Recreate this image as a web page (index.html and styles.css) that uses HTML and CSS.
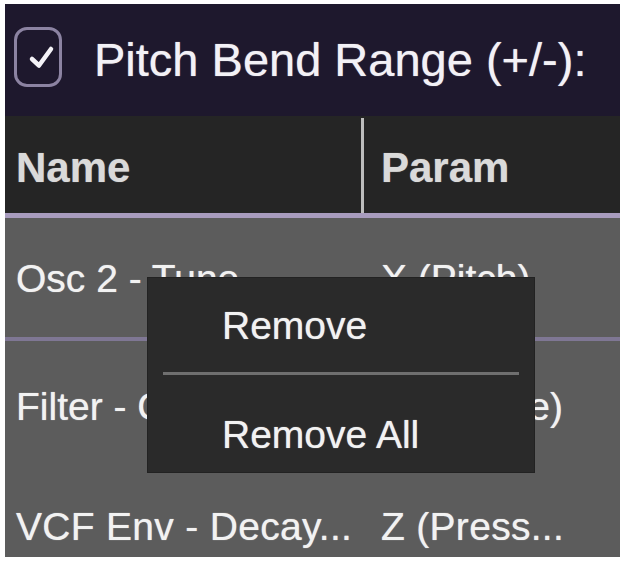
FILE: index.html
```html
<!DOCTYPE html>
<html lang="en">
<head>
  <meta charset="UTF-8" />
  <title>MPE Mapping</title>
  <link rel="stylesheet" href="styles.css">
</head>
<body>
  <div class="panel">
    <header class="top">
      <span class="checkbox">
        <svg viewBox="0 0 48 60" width="48" height="60">
          <path d="M18 32 L25 38.5 L37 22" fill="none" stroke="#f4f2f7" stroke-width="4.5" stroke-linecap="round" stroke-linejoin="round"/>
        </svg>
      </span>
      <span class="title">Pitch Bend Range (+/-):</span>
    </header>

    <div class="table">
      <div class="thead">
        <div class="cell name">Name</div>
        <div class="divider"></div>
        <div class="cell param">Param</div>
      </div>
      <div class="row first">
        <div class="cell name">Osc 2 - Tune</div>
        <div class="cell param">X (Pitch)</div>
      </div>
      <div class="row sep">
        <div class="cell name">Filter - Cutoff</div>
        <div class="cell param">Y (Timbre)</div>
      </div>
      <div class="row plain">
        <div class="cell name">VCF Env - Decay...</div>
        <div class="cell param">Z (Press...</div>
      </div>
    </div>

    <div class="menu">
      <div class="menu-item">Remove</div>
      <div class="menu-sep"></div>
      <div class="menu-item last">Remove All</div>
    </div>
  </div>
</body>
</html>
```

FILE: styles.css
```css
html, body {
  margin: 0;
  background: #fff;
  font-family: 'Liberation Sans', Arial, sans-serif;
}
.panel {
  position: relative;
  margin: 4px 0 0 5px;
  width: 615px;
  height: 553px;
  overflow: hidden;
  background: #5c5c5c;
}
.top {
  display: flex;
  align-items: flex-start;
  height: 112px;
  padding: 23px 0 0 9px;
  box-sizing: border-box;
  background: #1e182d;
}
.checkbox {
  width: 48px;
  height: 60px;
  box-sizing: border-box;
  border: 3px solid #8c83a2;
  border-radius: 13px;
  position: relative;
}
.checkbox svg {
  position: absolute;
  left: -3px;
  top: -3px;
}
.title {
  margin: 9px 0 0 32px;
  font-size: 47px;
  line-height: 47px;
  color: #f3f1f6;
  white-space: nowrap;
  text-shadow: 0 0 1px rgba(255, 255, 255, 0.7);
}
.thead {
  display: grid;
  grid-template-columns: 356px 3px 1fr;
  height: 97px;
  background: #252525;
  border-bottom: 5px solid #a89cbe;
}
.thead .cell {
  padding-top: 31px;
  font-size: 42px;
  line-height: 42px;
  font-weight: bold;
  color: #dadada;
  text-shadow: 0 0 1px rgba(255, 255, 255, 0.5);
}
.divider {
  margin-top: 2px;
  background: #bdbdbd;
}
.cell.name {
  padding-left: 11px;
  white-space: nowrap;
}
.cell.param {
  padding-left: 17px;
  white-space: nowrap;
}
.row {
  display: grid;
  grid-template-columns: 359px 1fr;
  height: 120px;
  box-sizing: border-box;
  padding-top: 42px;
  font-size: 39px;
  line-height: 39px;
  color: #f2f2f2;
  text-shadow: 0 0 1px rgba(255, 255, 255, 0.7);
}
.row.first {
  height: 119px;
  padding-top: 41px;
}
.row.sep {
  border-top: 4px solid #7f7794;
  height: 124px;
  padding-top: 46px;
}
.row.plain {
  border-top: 4px solid #5c5c5c;
  height: 124px;
  padding-top: 42px;
  letter-spacing: 0.3px;
}
.menu {
  position: absolute;
  left: 142px;
  top: 273px;
  width: 388px;
  height: 196px;
  box-sizing: border-box;
  padding-top: 28px;
  background: #2a2a2a;
  border: 1px solid #222;
}
.menu-item {
  padding-left: 74px;
  font-size: 39px;
  line-height: 39px;
  color: #f2f2f2;
  text-shadow: 0 0 1px rgba(255, 255, 255, 0.7);
}
.menu-sep {
  height: 3px;
  margin: 27px 15px 40px 15px;
  background: #6f6f6f;
}
```
